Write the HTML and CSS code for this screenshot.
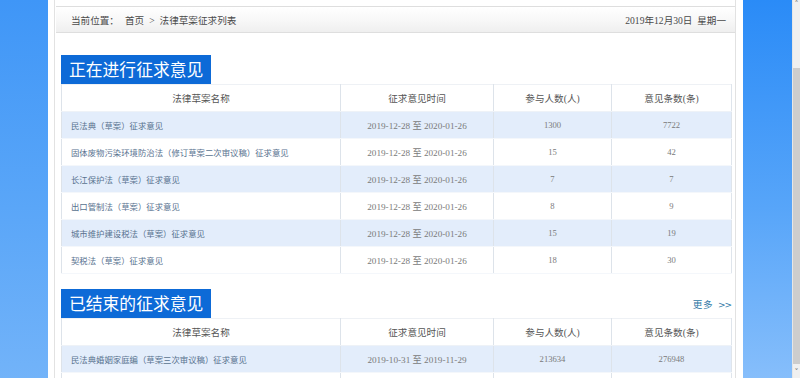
FILE: index.html
```html
<!DOCTYPE html>
<html lang="zh-CN">
<head>
<meta charset="utf-8">
<title>法律草案征求列表</title>
<link rel="stylesheet" href="styles.css">
</head>
<body>
<div class="page">
  <div class="side side-left"></div>
  <div class="main">
    <div class="container">
      <div class="crumb">
        <div class="crumb-path"><span class="crumb-label">当前位置：</span><span>首页</span><span class="crumb-sep">&gt;</span><span>法律草案征求列表</span></div>
        <div class="crumb-date">2019年12月30日&nbsp; 星期一</div>
      </div>

      <div class="section section-first">
        <div class="section-head">
          <h2 class="section-title">正在进行征求意见</h2>
        </div>
        <table class="list">
          <colgroup><col class="c1"><col class="c2"><col class="c3"><col class="c4"></colgroup>
          <thead>
            <tr><th>法律草案名称</th><th>征求意见时间</th><th>参与人数(人)</th><th>意见条数(条)</th></tr>
          </thead>
          <tbody>
            <tr><td class="name">民法典（草案）征求意见</td><td class="date">2019-12-28 至 2020-01-26</td><td>1300</td><td>7722</td></tr>
            <tr><td class="name">固体废物污染环境防治法（修订草案二次审议稿）征求意见</td><td class="date">2019-12-28 至 2020-01-26</td><td>15</td><td>42</td></tr>
            <tr><td class="name">长江保护法（草案）征求意见</td><td class="date">2019-12-28 至 2020-01-26</td><td>7</td><td>7</td></tr>
            <tr><td class="name">出口管制法（草案）征求意见</td><td class="date">2019-12-28 至 2020-01-26</td><td>8</td><td>9</td></tr>
            <tr><td class="name">城市维护建设税法（草案）征求意见</td><td class="date">2019-12-28 至 2020-01-26</td><td>15</td><td>19</td></tr>
            <tr><td class="name">契税法（草案）征求意见</td><td class="date">2019-12-28 至 2020-01-26</td><td>18</td><td>30</td></tr>
          </tbody>
        </table>
      </div>

      <div class="section section-second">
        <div class="section-head">
          <h2 class="section-title">已结束的征求意见</h2>
          <a class="more" href="#">更多 <span class="more-arrows">&gt;&gt;</span></a>
        </div>
        <table class="list">
          <colgroup><col class="c1"><col class="c2"><col class="c3"><col class="c4"></colgroup>
          <thead>
            <tr><th>法律草案名称</th><th>征求意见时间</th><th>参与人数(人)</th><th>意见条数(条)</th></tr>
          </thead>
          <tbody>
            <tr><td class="name">民法典婚姻家庭编（草案三次审议稿）征求意见</td><td class="date">2019-10-31 至 2019-11-29</td><td>213634</td><td>276948</td></tr>
            <tr><td class="name"></td><td class="date"></td><td></td><td></td></tr>
          </tbody>
        </table>
      </div>
    </div>
  </div>
  <div class="side side-right"></div>
  <div class="scrollbar">
    <div class="sb-arrow sb-up">&#x2C4;</div>
    <div class="sb-track"><div class="sb-thumb"></div></div>
    <div class="sb-arrow sb-down">&#x2C5;</div>
  </div>
</div>
</body>
</html>
```

FILE: styles.css
```css
* { box-sizing: border-box; }
html, body { margin: 0; padding: 0; }
body {
  background: #ffffff;
  font-family: "Liberation Serif", "Noto Sans CJK SC", serif;
  font-size: 9.6px;
  color: #555;
  overflow: hidden;
}
.page {
  display: flex;
  width: 800px;
  height: 378px;
  overflow: hidden;
}
.side { flex: none; height: 100%; }
.side-left {
  width: 48px;
  background: linear-gradient(to bottom, #3f96f7 0%, #5aa6f8 55%, #72b3f9 100%);
}
.side-right {
  width: 49px;
  background: linear-gradient(to bottom, #2a8bf7 0%, #57a5f9 55%, #86befb 100%);
}
.main {
  flex: none;
  width: 695px;
  height: 100%;
  padding: 0 7px 0 6px;
  background: #fff;
}
.container {
  height: 100%;
  border-left: 1px solid #e2e2e2;
  border-right: 1px solid #e2e2e2;
  padding-top: 6px;
}
.crumb {
  height: 27px;
  display: flex;
  align-items: center;
  justify-content: space-between;
  padding: 0 9px 0 15px;
  border-top: 1px solid #dedede;
  border-bottom: 1px solid #dedede;
  margin-left: 1px;
  background: linear-gradient(to bottom, #ffffff 0%, #f8f8f8 50%, #efefef 100%);
  color: #4a4a4a;
  font-size: 9.6px;
}
.crumb-label { margin-right: 6px; }
.crumb-sep { margin: 0 5px 0 5px; }
.crumb-date { color: #4a4a4a; }

.section { padding: 0 4px 0 6px; }
.section-first { margin-top: 22px; }
.section-second { margin-top: 15px; }
.section-head {
  display: flex;
  align-items: center;
  justify-content: space-between;
  height: 29px;
}
.section-title {
  margin: 0;
  height: 29px;
  width: 150px;
  background: #0d6ad7;
  color: #fff;
  font-family: "Noto Sans CJK SC", sans-serif;
  font-weight: normal;
  font-size: 16.8px;
  line-height: 29px;
  padding-left: 8px;
  letter-spacing: 0;
}
.more {
  color: #2f79a6;
  text-decoration: none;
  font-size: 9.6px;
  margin-top: 0;
  letter-spacing: 0.5px;
}
.more-arrows { letter-spacing: -1px; font-family: "DejaVu Sans", sans-serif; font-size: 9px; margin-left: 2px; }

.list {
  width: 670px;
  border-collapse: collapse;
  table-layout: fixed;
  border: 1px solid #dfe5ec;
  border-top: 1px solid #eef1f5;
}
.list col.c1 { width: 279px; }
.list col.c2 { width: 153px; }
.list col.c3 { width: 118px; }
.list col.c4 { width: 120px; }
.list th, .list td {
  height: 27px;
  padding: 0;
  text-align: center;
  white-space: nowrap;
  overflow: hidden;
  border-left: 1px solid #dde3ea;
  font-weight: normal;
}
.list th {
  color: #555;
  font-size: 9.6px;
  background: #fff;
  border-bottom: 1px solid #eef2f7;
}
.list td {
  color: #7a7a7a;
  font-size: 8.6px;
  border-bottom: 1px solid #f4f7fb;
}
.list td.date { font-size: 9.2px; }
.list td.name {
  text-align: left;
  padding-left: 9px;
  color: #58728f;
  font-size: 8.4px;
}
.list tbody tr:nth-child(odd) td { background: #e3edfb; }
.list tbody tr:nth-child(even) td { background: #ffffff; }

.scrollbar {
  flex: none;
  width: 8px;
  height: 100%;
  background: #f0f0f0;
  display: flex;
  flex-direction: column;
  border-left: 1px solid #e6e6e6;
}
.sb-arrow {
  height: 10px;
  font-size: 8px;
  line-height: 10px;
  color: #777;
  text-align: center;
  font-family: "DejaVu Sans", sans-serif;
}
.sb-track {
  flex: 1;
  padding-top: 58px;
  padding-bottom: 4px;
}
.sb-thumb {
  height: 100%;
  background: #cdcdcd;
}
```
